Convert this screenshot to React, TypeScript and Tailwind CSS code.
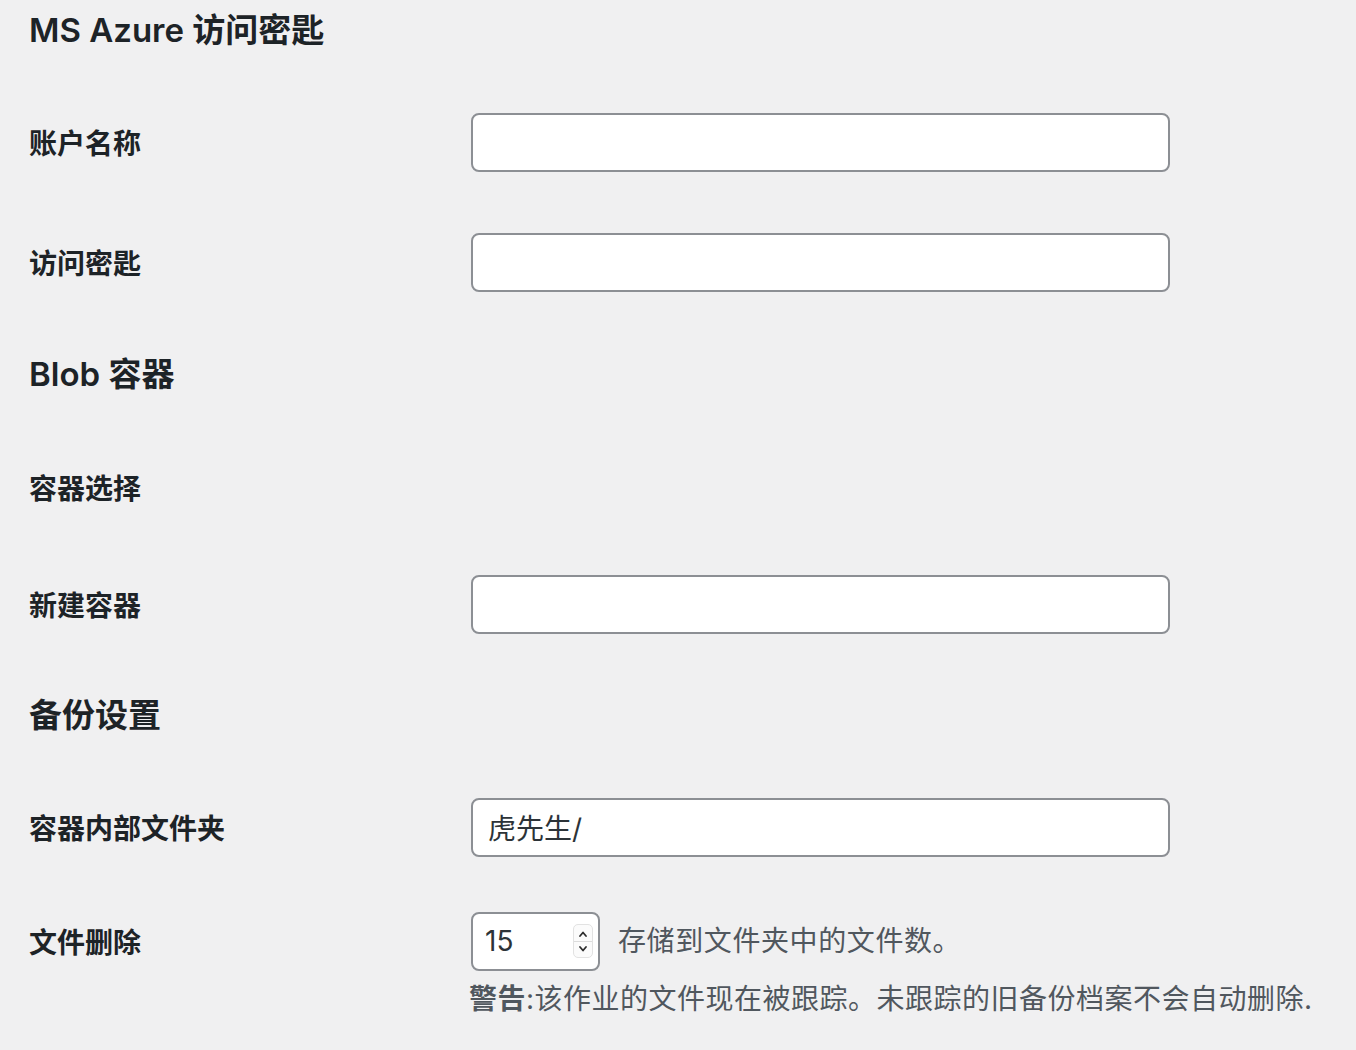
import type { ReactNode } from "react";

const font = "font-['Inter','Noto_Sans_CJK_SC',sans-serif]";

function Heading({ children, mt }: { children: ReactNode; mt: string }) {
  return (
    <h3 className={`${mt} h-[40px] flex items-center text-[33px] font-semibold text-[#1d2327] leading-none`}>
      {children}
    </h3>
  );
}

function Row({ label, mt, children }: { label: string; mt: string; children?: ReactNode }) {
  return (
    <div className={`${mt} flex h-[58px] items-center`}>
      <div className="w-[442px] shrink-0 pt-1 text-[28px] font-semibold text-[#1d2327] leading-none">
        {label}
      </div>
      <div className="flex items-center">{children}</div>
    </div>
  );
}

function TextInput({ value = "" }: { value?: string }) {
  return (
    <input
      type="text"
      readOnly
      defaultValue={value}
      className={`${font} w-[699px] h-[59px] rounded-[8px] border-2 border-[#8c8f94] bg-white px-[15px] text-[28px] text-[#2c3338] outline-none`}
    />
  );
}

function NumberBox() {
  return (
    <div className="flex h-[59px] w-[129px] items-center justify-between rounded-[8px] border-2 border-[#8c8f94] bg-white pl-[12px] pr-[5px]">
      <span className="text-[28px] text-[#2c3338] leading-none">15</span>
      {/* 数字输入框的上下箭头 */}
      <div className="flex h-[34px] w-[20px] flex-col items-center justify-center rounded-[5px] border border-[#e2e2e2] bg-[#fbfbfb]">
        <svg width="12" height="14" viewBox="0 0 12 14" fill="none">
          <path d="M3 9 L6 5.5 L9 9" stroke="#2c2c2c" strokeWidth="1.8" strokeLinecap="round" strokeLinejoin="round" />
        </svg>
        <div className="h-px w-full bg-[#dcdcdc]" />
        <svg width="12" height="14" viewBox="0 0 12 14" fill="none">
          <path d="M3 5 L6 8.5 L9 5" stroke="#2c2c2c" strokeWidth="1.8" strokeLinecap="round" strokeLinejoin="round" />
        </svg>
      </div>
    </div>
  );
}

export default function App() {
  return (
    <div className={`${font} min-h-[1050px] w-full bg-[#f0f0f1] pl-[29px] pt-[10px]`}>
      {/* Azure 访问密匙 */}
      <Heading mt="mt-0">MS Azure 访问密匙</Heading>
      <Row label="账户名称" mt="mt-[63px]">
        <TextInput />
      </Row>
      <Row label="访问密匙" mt="mt-[62px]">
        <TextInput />
      </Row>

      {/* Blob 容器 */}
      <Heading mt="mt-[63px]">Blob 容器</Heading>
      <Row label="容器选择" mt="mt-[64px]" />
      <Row label="新建容器" mt="mt-[59px]">
        <TextInput />
      </Row>

      {/* 备份设置 */}
      <Heading mt="mt-[62px]">备份设置</Heading>
      <Row label="容器内部文件夹" mt="mt-[63px]">
        <TextInput value="虎先生/" />
      </Row>
      <Row label="文件删除" mt="mt-[56px]">
        <NumberBox />
        <span className="ml-[18px] text-[28px] tracking-[0.6px] text-[#50575e] leading-none">存储到文件夹中的文件数。</span>
      </Row>
      <div className="mt-[9px] ml-[440px] flex h-[40px] items-center text-[28px] tracking-[0.5px] text-[#50575e] leading-none">
        <span>
          <strong className="font-semibold">警告</strong>:该作业的文件现在被跟踪。未跟踪的旧备份档案不会自动删除.
        </span>
      </div>
    </div>
  );
}
